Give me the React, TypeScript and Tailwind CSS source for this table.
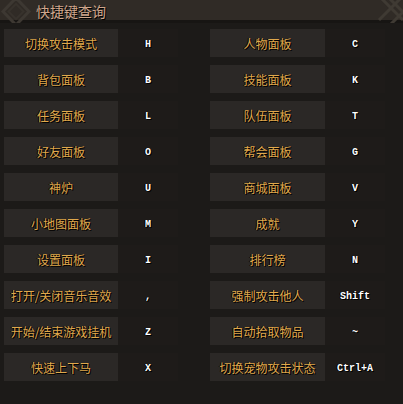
import type { FC } from "react";

const rows: [string, string, string, string][] = [
    ["切换攻击模式", "H", "人物面板", "C"],
    ["背包面板", "B", "技能面板", "K"],
    ["任务面板", "L", "队伍面板", "T"],
    ["好友面板", "O", "帮会面板", "G"],
    ["神炉", "U", "商城面板", "V"],
    ["小地图面板", "M", "成就", "Y"],
    ["设置面板", "I", "排行榜", "N"],
    ["打开/关闭音乐音效", ",", "强制攻击他人", "Shift"],
    ["开始/结束游戏挂机", "Z", "自动拾取物品", "~"],
    ["快速上下马", "X", "切换宠物攻击状态", "Ctrl+A"],
];

const Cell: FC<{ label: string; hotkey: string; wide?: boolean }> = ({ label, hotkey, wide }) => (
    <div className="flex items-stretch h-[28px] bg-[#1e1b19]">
        <div
            className={`${wide ? "w-[115px]" : "w-[114px]"} flex items-center justify-center pt-[1px] bg-[#2b2826] text-[12px] text-[#e0a94c] [text-shadow:1px_1px_0_#000,-1px_0_0_#000] whitespace-nowrap`}
        >
            {label}
        </div>
        <div className="w-[60px] flex items-center justify-center pt-[2px] text-[10px] font-bold text-white [font-family:'Liberation_Mono',monospace] [text-shadow:1px_1px_0_#000,-1px_0_0_#000]">
            {hotkey}
        </div>
    </div>
);

export default function App() {
    return (
        <div className="w-[403px] h-[404px] bg-[#1c1a18] overflow-hidden [font-family:'Noto_Sans_CJK_SC',sans-serif]">
            <div className="relative h-[23px] bg-[#302b26] border-b-[3px] border-[#171513]">
                <svg width="32" height="23" viewBox="0 0 32 23" className="absolute left-0 top-0">
                    <path d="M16 -2 L29 11.5 L16 25 L3 11.5 Z" fill="none" stroke="#3d3832" strokeWidth="3" />
                    <path d="M16 4 L23.5 11.5 L16 19 L8.5 11.5 Z" fill="none" stroke="#37322c" strokeWidth="2" />
                </svg>
                <svg width="26" height="23" viewBox="0 0 26 23" className="absolute right-0 top-0">
                    <path d="M2 -4 L26 20 M10 -4 L26 12 M2 20 L26 -4 M10 28 L26 12" stroke="#3f3a33" strokeWidth="3" />
                </svg>
                <div className="relative pl-[36px] leading-[23px] text-[14px] text-[#cfa68c] [text-shadow:1px_1px_0_#000]">快捷键查询</div>
            </div>
            <div className="pt-[6px] pl-[4px] flex flex-col gap-[8px]">
                {rows.map((r) => (
                    <div key={r[0]} className="flex gap-[32px]">
                        <Cell label={r[0]} hotkey={r[1]} />
                        <Cell label={r[2]} hotkey={r[3]} wide />
                    </div>
                ))}
            </div>
        </div>
    );
}
